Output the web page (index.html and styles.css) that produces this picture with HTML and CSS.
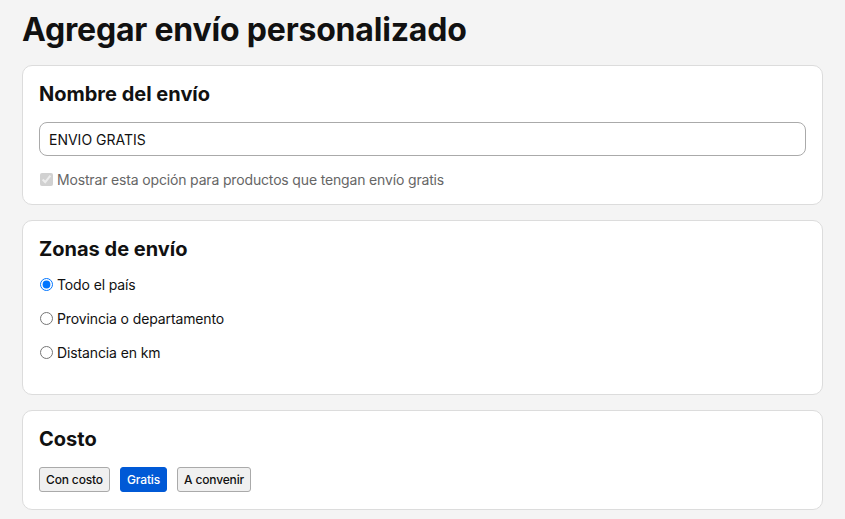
FILE: index.html
```html
<!DOCTYPE html>
<html lang="es">
<head>
  <meta charset="UTF-8">
  <meta name="viewport" content="width=device-width, initial-scale=1.0">
  <title>Agregar envío personalizado</title>
  <link rel="stylesheet" href="styles.css">
</head>
<body>
  <div class="page">
    <h1>Agregar envío personalizado</h1>

    <div class="card nombre">
      <h2>Nombre del envío</h2>
      <input class="text-input" type="text" value="ENVIO GRATIS">
      <label class="check-row">
        <input type="checkbox" checked disabled>
        Mostrar esta opción para productos que tengan envío gratis
      </label>
    </div>

    <div class="card zonas">
      <h2>Zonas de envío</h2>
      <label class="radio-row"><input type="radio" name="zona" checked> Todo el país</label>
      <label class="radio-row"><input type="radio" name="zona"> Provincia o departamento</label>
      <label class="radio-row"><input type="radio" name="zona"> Distancia en km</label>
    </div>

    <div class="card costo">
      <h2>Costo</h2>
      <div class="btn-group">
        <button class="opt-btn">Con costo</button>
        <button class="opt-btn active">Gratis</button>
        <button class="opt-btn">A convenir</button>
      </div>
    </div>
  </div>
</body>
</html>
```

FILE: styles.css
```css
body {
  margin: 0;
  background: #f4f4f4;
  font-family: Inter, "Liberation Sans", sans-serif;
  color: #111;
}

.page {
  padding: 9px 22px 0 22px;
  display: flex;
  flex-direction: column;
  gap: 15px;
}

h1 {
  font-size: 32px;
  font-weight: 700;
  margin: 0 0 -1px 0;
  letter-spacing: -0.2px;
  line-height: 42px;
}

.card {
  background: #fff;
  border: 1px solid #dcdcdc;
  border-radius: 10px;
  padding: 15px 16px 16px 16px;
  display: flex;
  flex-direction: column;
}

.nombre {
  padding-top: 14px;
}

h2 {
  font-size: 20px;
  font-weight: 700;
  margin: 0 0 14px 0;
  line-height: 28px;
}

.text-input {
  height: 34px;
  box-sizing: border-box;
  border: 1px solid #aaa;
  border-radius: 8px;
  padding: 0 9px;
  font-family: inherit;
  font-size: 14px;
  color: #111;
}

.check-row {
  display: flex;
  align-items: center;
  gap: 4px;
  margin-top: 15px;
  font-size: 14px;
  letter-spacing: -0.16px;
  color: #666;
}

.check-row input {
  margin: 0 0 0 1px;
  width: 13px;
  height: 13px;
}

.zonas {
  padding-top: 14px;
  padding-bottom: 25px;
}

.radio-row {
  display: flex;
  align-items: center;
  gap: 4px;
  font-size: 14px;
  letter-spacing: -0.12px;
  height: 34px;
}

.radio-row:first-of-type {
  margin-top: -10px;
}

.radio-row input {
  margin: 0 0 0 1px;
  width: 13px;
  height: 13px;
}

.costo h2 {
  margin-bottom: 13px;
}

.costo {
  padding-top: 14px;
}

.btn-group {
  display: flex;
  gap: 10px;
  padding: 1px 0 1px 0;
}

.opt-btn {
  height: 25px;
  padding: 0 6px;
  font-family: inherit;
  font-size: 12px;
  font-weight: 500;
  letter-spacing: -0.15px;
  background: #f0f0f0;
  border: 1px solid #aaa;
  border-radius: 3px;
  color: #111;
}

.opt-btn.active {
  background: #0059d6;
  border-color: #0059d6;
  color: #fff;
}
```
